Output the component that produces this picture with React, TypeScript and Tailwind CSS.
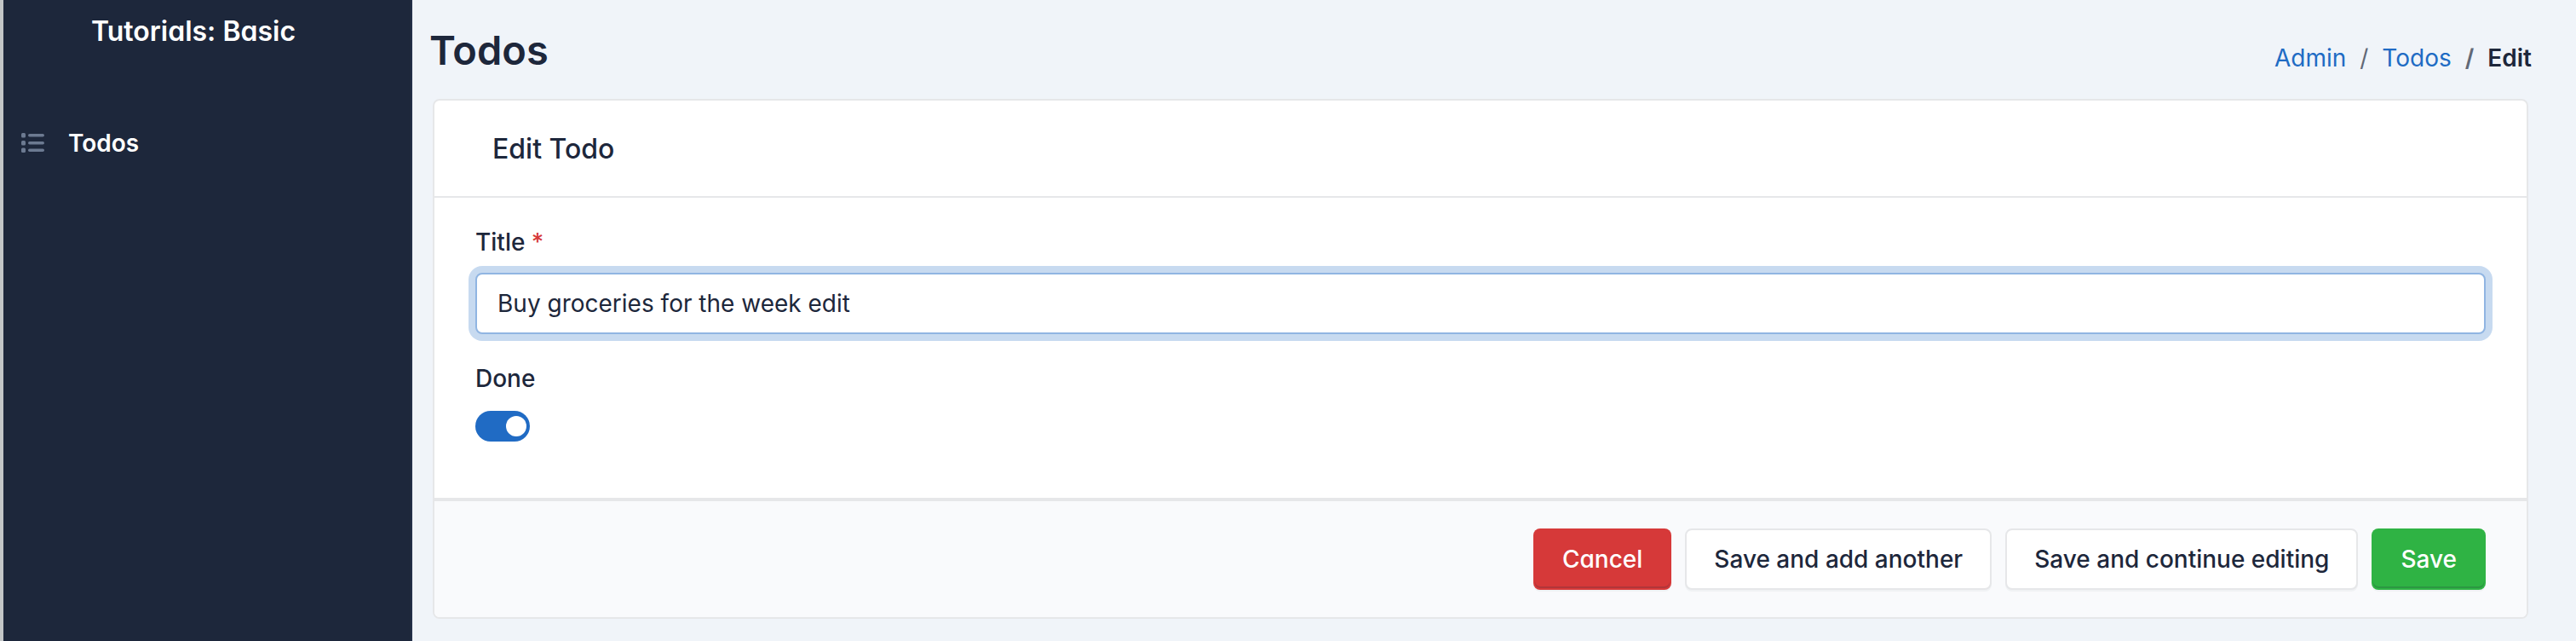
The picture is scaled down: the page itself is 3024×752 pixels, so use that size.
import { useState } from "react";

function Sidebar() {
  return (
    <aside className="w-[484px] shrink-0 border-l-4 border-[#c3c6c7] bg-[#1d273b] text-white">
      <div className="flex h-full flex-col border-r-2 border-[#243049]">
        <h1 className="pr-8 pt-[17px] text-center text-[32px] leading-10 font-semibold">
          <a href="#home">Tutorials: Basic</a>
        </h1>
        <nav className="pt-[91px]">
          <a href="#todos" className="flex items-center gap-7 px-5 text-[28px] leading-10 font-semibold">
            <svg className="h-7 w-7 text-[#6c7a91]" viewBox="0 0 28 28" fill="currentColor" aria-hidden="true">
              <rect x="1" y="2" width="5" height="5.5" rx="1.5" />
              <rect x="1" y="11" width="5" height="5.5" rx="1.5" />
              <rect x="1" y="19.5" width="5" height="5.5" rx="1.5" />
              <rect x="9" y="3" width="19" height="3.5" rx="1.75" />
              <rect x="9" y="12" width="19" height="3.5" rx="1.75" />
              <rect x="9" y="20.5" width="19" height="3.5" rx="1.75" />
            </svg>
            <span>Todos</span>
          </a>
        </nav>
      </div>
    </aside>
  );
}

function Breadcrumb() {
  return (
    <nav aria-label="Breadcrumb">
      <ol className="flex gap-4 text-[28px] leading-10">
        <li>
          <a href="#admin" className="text-[#206bc4]">Admin</a>
        </li>
        <li className="flex gap-4">
          <span className="text-[#616876]">/</span>
          <a href="#todos" className="text-[#206bc4]">Todos</a>
        </li>
        <li className="flex gap-4 font-semibold" aria-current="page">
          <span className="text-[#616876]">/</span>
          <span>Edit</span>
        </li>
      </ol>
    </nav>
  );
}

const button =
  "rounded-lg border-2 px-8 py-[14px] text-[28px] leading-10 font-medium";
const solid =
  "border-transparent text-white shadow-[0_2px_0_rgba(29,39,59,0.04),inset_0_-2px_0_rgba(29,39,59,0.2)]";
const outline =
  "border-[#e6e7e9] bg-white shadow-[0_2px_0_rgba(29,39,59,0.04)]";

export default function App() {
  const [title, setTitle] = useState("Buy groceries for the week edit");
  const [done, setDone] = useState(true);

  return (
    <div className="flex min-h-screen bg-[#f0f4f9] font-['Inter',sans-serif] text-[#1d273b] [font-feature-settings:'cv03','cv04','cv11']">
      <Sidebar />
      <main className="min-w-0 flex-1 pl-6 pr-14">
        <header className="-mx-1 flex items-start justify-between pt-7">
          <h2 className="text-[47px] leading-[62px] font-semibold">Todos</h2>
          <div className="pt-5">
            <Breadcrumb />
          </div>
        </header>
        <form
          className="mt-[26px] overflow-hidden rounded-lg border-2 border-[#e6e7e9] bg-white"
          onSubmit={(event) => event.preventDefault()}
        >
          <div className="border-b-2 border-[#e6e7e9] px-[68px] pt-[37px] pb-[35px]">
            <h3 className="text-[32px] leading-10 font-medium">Edit Todo</h3>
          </div>
          <div className="px-12 pt-8 pb-[66px]">
            <label htmlFor="title" className="block text-[28px] leading-10 font-medium">
              Title <span className="text-[#d63939]">*</span>
            </label>
            <input
              id="title"
              type="text"
              required
              value={title}
              onChange={(event) => setTitle(event.target.value)}
              className="mt-4 block w-full rounded-lg border-2 border-[#90b5e2] bg-white px-6 py-[14px] text-[28px] leading-10 shadow-[0_0_0_8px_rgba(32,107,196,0.25)] outline-none"
            />
            <label htmlFor="done" className="mt-8 block text-[28px] leading-10 font-medium">
              Done
            </label>
            <input
              id="done"
              type="checkbox"
              role="switch"
              checked={done}
              onChange={(event) => setDone(event.target.checked)}
              className="mt-[18px] flex h-9 w-16 appearance-none items-center rounded-full bg-[#c8d3e1] px-1 before:h-6 before:w-6 before:rounded-full before:bg-white checked:justify-end checked:bg-[#206bc4]"
            />
          </div>
          <div className="flex justify-end gap-4 border-t-4 border-[#e6e7e9] bg-[#f9fafc] px-12 py-8">
            <a href="#todos" className={`${button} ${solid} bg-[#d63939]`}>Cancel</a>
            <button type="submit" className={`${button} ${outline} [font-feature-settings:normal]`}>Save and add another</button>
            <button type="submit" className={`${button} ${outline} [font-feature-settings:normal]`}>Save and continue editing</button>
            <button type="submit" className={`${button} ${solid} bg-[#2fb344] [font-feature-settings:normal]`}>Save</button>
          </div>
        </form>
      </main>
    </div>
  );
}
